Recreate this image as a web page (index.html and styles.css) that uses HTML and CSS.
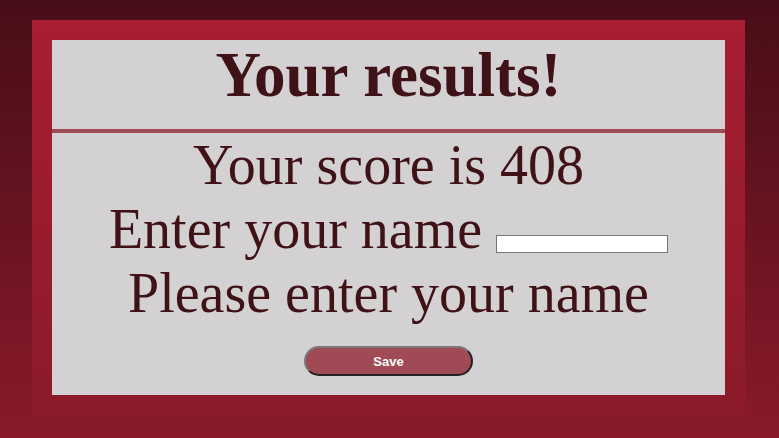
FILE: index.html
```html
<!DOCTYPE html>
<html>
<head>
<meta charset="utf-8">
<link rel="stylesheet" href="styles.css">
</head>
<body>
<div class="frame">
  <div class="card">
    <header class="head">
      <h1 class="title">Your results!</h1>
    </header>
    <section class="content">
      <p class="line">Your score is 408</p>
      <p class="line">Enter your name <input class="name-input" type="text"></p>
      <p class="line">Please enter your name</p>
      <div class="actions"><button class="save">Save</button></div>
    </section>
  </div>
</div>
</body>
</html>
```

FILE: styles.css
```css
html, body {
  margin: 0;
  padding: 0;
}
body {
  min-height: 438px;
  background: linear-gradient(to bottom, #470e17 0%, #8a1a2a 100%);
  font-family: "Liberation Serif", "Times New Roman", serif;
  color: #3f1218;
  overflow: hidden;
}
.frame {
  margin: 20px 34px 0 32px;
  padding: 20px;
  background: linear-gradient(to bottom, #a81e33 0%, #8b1a2b 100%);
}
.card {
  background: #d3d1d2;
  height: 355px;
  display: flex;
  flex-direction: column;
}
.head {
  height: 89px;
  box-sizing: border-box;
  padding-top: 4px;
  border-bottom: 4px solid #a04a55;
  display: flex;
  align-items: flex-start;
  justify-content: center;
  height: 93px;
}
.title {
  margin: 0;
  font-size: 63px;
  font-weight: bold;
  line-height: 1;
}
.content {
  text-align: center;
}
.line {
  margin: 0;
  font-size: 56px;
  line-height: 64px;
}
.name-input {
  width: 168px;
  height: 14px;
  padding: 1px;
  border: 1px solid #767676;
  background: #fff;
  vertical-align: 0;
  font-size: 12px;
}
.actions {
  margin-top: 21px;
  display: flex;
  justify-content: center;
}
.save {
  width: 169px;
  height: 30px;
  border-radius: 15px;
  background: #a04a55;
  color: #fff;
  font-family: "Liberation Sans", Arial, sans-serif;
  font-weight: bold;
  font-size: 13px;
  border: 2px solid;
  border-color: #7a7a7a #222 #222 #7a7a7a;
  padding: 0;
}
```
